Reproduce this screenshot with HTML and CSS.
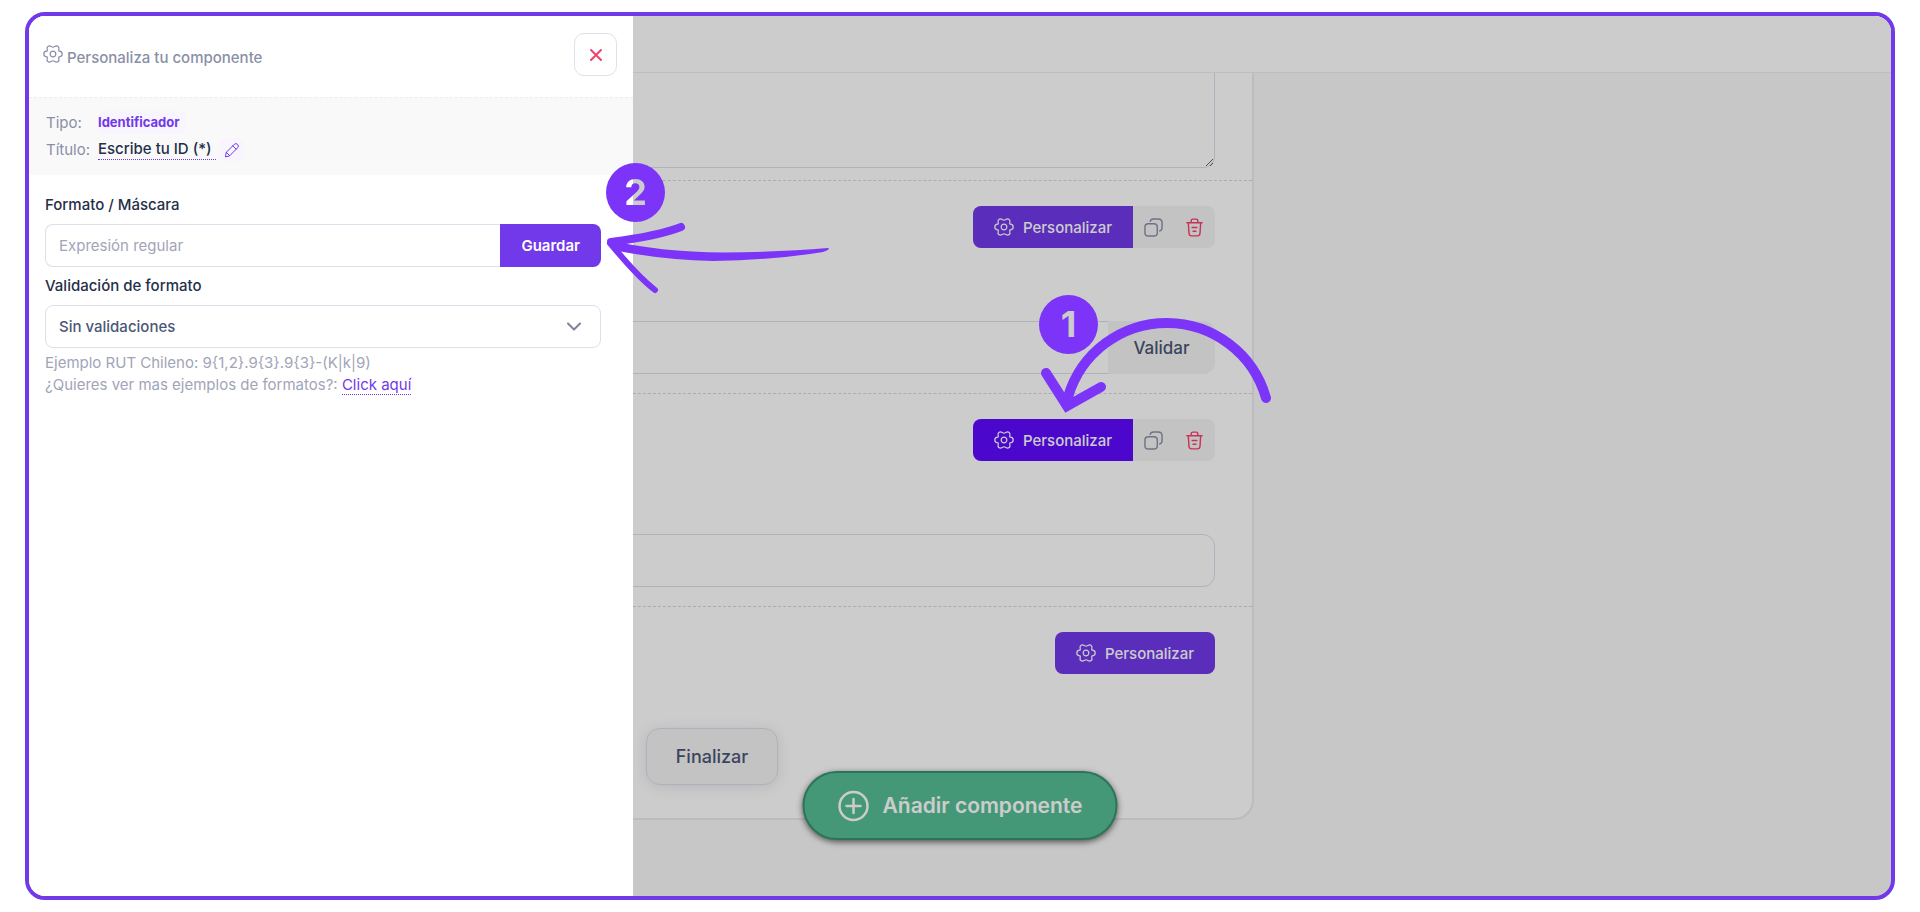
FILE: index.html
```
<!DOCTYPE html>
<html lang="es">
<head>
  <meta charset="UTF-8">
  <title>Personaliza tu componente</title>
  <link rel="stylesheet" href="styles.css">
</head>
<body>
  <svg class="sprite" aria-hidden="true">
    <symbol id="gear" viewBox="-12 -12 24 24">
      <path d="M11 0C11 3.800 8.200 3.200 7 3.500C5.900 4.200 8.700 7.200 6.200 9C3.500 11.200 2.300 8.300 0 8.100C-2.300 8.300 -3.500 11.200 -6.200 9C-8.700 7.200 -5.900 4.200 -7 3.500C-8.200 3.200 -11 3.800 -11 0C-11 -3.800 -8.200 -3.200 -7 -3.500C-5.900 -4.200 -8.700 -7.200 -6.200 -9C-3.500 -11.200 -2.300 -8.300 0 -8.100C2.300 -8.300 3.500 -11.200 6.200 -9C8.700 -7.200 5.900 -4.200 7 -3.500C8.200 -3.200 11 -3.800 11 0Z"/>
      <circle r="3.4"/>
    </symbol>
    <symbol id="copy" viewBox="0 0 20 20">
      <rect x="1" y="6" width="13" height="13" rx="3.5"/>
      <path d="M6.5 3.5Q7 1 10 1H15Q19 1 19 5V10Q19 13.2 16.5 13.6"/>
    </symbol>
    <symbol id="trash" viewBox="0 0 20 20">
      <path d="M2 5H18M6.5 5V3Q6.5 1.2 8.3 1.2H11.7Q13.5 1.2 13.5 3V5M3.500 5L4.200 16Q4.400 18.800 7 18.800H13Q15.600 18.800 15.800 16L16.500 5M7.5 10H12.5M8.5 14H11.5"/>
    </symbol>
  </svg>

  <div class="frame">
    <header class="navbar"></header>

    <main class="page">
      <div class="card">
        <div class="card-top">
          <textarea class="field area" aria-label="Texto"></textarea>
        </div>

        <section class="component">
          <div class="toolbar">
            <button class="btn-custom" type="button"><svg class="icon"><use href="#gear"/></svg>Personalizar</button>
            <button class="btn-tool" type="button" aria-label="Duplicar"><svg class="icon"><use href="#copy"/></svg></button>
            <button class="btn-tool danger" type="button" aria-label="Eliminar"><svg class="icon"><use href="#trash"/></svg></button>
          </div>
          <div class="group">
            <input class="field" type="text" aria-label="Valor">
            <button class="btn-check" type="button">Validar</button>
          </div>
        </section>

        <section class="component">
          <div class="toolbar">
            <button class="btn-custom active" type="button"><svg class="icon"><use href="#gear"/></svg>Personalizar</button>
            <button class="btn-tool" type="button" aria-label="Duplicar"><svg class="icon"><use href="#copy"/></svg></button>
            <button class="btn-tool danger" type="button" aria-label="Eliminar"><svg class="icon"><use href="#trash"/></svg></button>
          </div>
          <div class="group">
            <input class="field" type="text" aria-label="ID">
          </div>
        </section>

        <section class="component last">
          <div class="toolbar">
            <button class="btn-custom" type="button"><svg class="icon"><use href="#gear"/></svg>Personalizar</button>
          </div>
          <button class="btn-finish" type="button">Finalizar</button>
        </section>
      </div>
    </main>

    <button class="btn-add" type="button">
      <svg viewBox="0 0 32 32"><circle cx="16" cy="16" r="14"/><path d="M16 9V23M9 16H23"/></svg>
      Añadir componente
    </button>

    <div class="overlay"></div>

    <aside class="drawer">
      <div class="drawer-header">
        <h1><svg class="icon"><use href="#gear"/></svg>Personaliza tu componente</h1>
        <button class="btn-close" type="button" aria-label="Cerrar">
          <svg viewBox="0 0 14 14"><path d="M2 2L12 12M12 2L2 12"/></svg>
        </button>
      </div>

      <div class="info">
        <span>Tipo:</span>
        <span class="badge">Identificador</span>
        <span>Título:</span>
        <span class="title">
          <a href="#">Escribe tu ID (*)</a>
          <button class="btn-edit" type="button" aria-label="Editar título">
            <svg viewBox="0 0 16 16"><path d="M1.5 14.5L2.3 10.3L10.3 2.3Q12 .8 13.6 2.4Q15.200 4 13.700 5.700L5.700 13.700ZM8.800 3.800L12.200 7.200M2.300 10.300L5.700 13.700"/></svg>
          </button>
        </span>
      </div>

      <form class="form">
        <label for="mask">Formato / Máscara</label>
        <div class="mask">
          <input type="text" id="mask" placeholder="Expresión regular">
          <button type="button">Guardar</button>
        </div>

        <label for="validation">Validación de formato</label>
        <div class="select">
          <select id="validation">
            <option>Sin validaciones</option>
          </select>
          <svg viewBox="0 0 14 9"><path d="M1 1.500L7 7.500L13 1.500"/></svg>
        </div>

        <p class="help">Ejemplo RUT Chileno: 9{1,2}.9{3}.9{3}-(K|k|9)</p>
        <p class="help">¿Quieres ver mas ejemplos de formatos?: <a href="#">Click aquí</a></p>
      </form>
    </aside>

    <!-- Step callouts -->
    <span class="step step-1">1</span>
    <svg class="arrow arrow-1" viewBox="1035 312 240 106">
      <path d="M1266 398A103 103 0 0 0 1068 397"/>
      <path d="M1046 373L1067 406L1101 387"/>
    </svg>
    <span class="step step-2">2</span>
    <svg class="arrow arrow-2" viewBox="600 215 240 86">
      <path class="upper" d="M611 242Q658 236 681 227"/>
      <path class="lower" d="M610 243Q637 276 655 290"/>
      <path class="shaft" d="M608 240Q660 252 723 252.500Q780 252 828 248Q831 249 823 252Q775 260 713 261Q665 260 618 251Z"/>
    </svg>
  </div>
</body>
</html>
```

FILE: styles.css
```
* { box-sizing: border-box; }
body { margin: 0; background: #fff; font-family: Inter, "Liberation Sans", sans-serif; font-size: 15px; color: #252f4a; }
button, input, select, textarea { font: inherit; margin: 0; }
button { cursor: pointer; border: none; }
svg { fill: none; stroke: currentColor; stroke-linecap: round; stroke-linejoin: round; flex: none; }
.sprite { position: absolute; width: 0; height: 0; }
.icon { width: 20px; height: 20px; stroke-width: 1.5; }

.frame { position: relative; display: flex; flex-direction: column; height: calc(100vh - 24px); margin: 12px 25px; border: 4px solid #7239ea; border-radius: 20px; background: #f9f9f9; overflow: hidden; }
.navbar { height: 57px; flex: none; background: #fff; border-bottom: 1px solid #eee; }
.page { flex: 1; padding-left: 141px; }

/* Form preview */
.card { max-width: 1084px; background: #fff; border: 2px solid #ebebf0; border-top: none; border-radius: 0 0 20px 20px; }
.card-top { padding: 0 37px 12px; }
.field { display: block; width: 100%; height: 53px; padding: 0 16px; border: 1px solid #dbdfe9; border-radius: 12px; background: #fff; outline: none; }
.area { height: 95px; border-top: none; border-radius: 0 0 12px 12px; resize: vertical; }
.component { height: 213px; padding: 25px 37px 0; border-top: 1px dashed #d8d8dc; }
.component.last { height: 212px; }
.toolbar { display: flex; width: max-content; margin-left: auto; border-radius: 8px; background: #f4f4f4; overflow: hidden; }
.btn-custom { display: flex; align-items: center; gap: 9px; height: 42px; padding: 0 21px; background: #7239ea; color: #fff; font-weight: 500; }
.btn-custom.active { background: #5e0aff; }
.btn-tool { display: flex; align-items: center; justify-content: center; width: 41px; height: 42px; padding: 0; background: none; color: #8a8fa8; }
.btn-tool .icon { width: 19px; height: 19px; }
.danger { color: #f8406c; }
.group { display: flex; margin-top: 73px; }
.btn-check { flex: none; width: 107px; padding: 0; border-radius: 0 12px 12px 0; background: #f4f4f4; color: #4b5675; font-size: 17px; font-weight: 500; }
.group .field:not(:last-child) { border-right: none; border-radius: 12px 0 0 12px; }
.btn-finish { display: block; height: 57px; margin: 54px auto 0; padding: 0 29px; border: 1px solid #dbdfee; border-radius: 14px; background: #f4f4f4; box-shadow: 0 2px 14px rgba(0, 0, 0, .1); color: #4b5675; font-size: 18px; font-weight: 500; }

.btn-add { position: absolute; left: 50%; bottom: 56px; transform: translateX(-50%); display: flex; align-items: center; gap: 13px; height: 69px; padding: 0 33px; border: 2px solid #39936f; border-radius: 35px; background: #55bf96; box-shadow: 0 2px 6px rgba(0, 0, 0, .6); color: #fff; font-size: 21px; font-weight: 600; white-space: nowrap; }
.btn-add svg { width: 32px; height: 32px; stroke-width: 2.5; }
.overlay { position: absolute; inset: 0; background: rgba(0, 0, 0, .2); }

/* Settings drawer */
.drawer { position: absolute; top: 0; bottom: 0; left: 0; width: 604px; max-width: 100%; background: #fff; }
.drawer-header { display: flex; align-items: center; justify-content: space-between; height: 81px; padding: 0 16px 4px 14px; }
h1 { display: flex; align-items: flex-end; gap: 4px; margin: 0; padding-top: 3px; color: #8a8fa8; font-size: 15px; font-weight: 500; line-height: 20px; }
h1 .icon { margin-bottom: 4px; }
.btn-close { display: flex; align-items: center; justify-content: center; width: 43px; height: 43px; border: 1px solid #dfe1ec; border-radius: 10px; background: #fff; color: #f1416c; }
.btn-close svg { width: 14px; height: 14px; stroke-width: 2; }
.info { display: grid; grid-template-columns: 44px 1fr; align-items: center; gap: 4px 8px; padding: 13px 17px 14px; border-top: 1px dashed #eee; background: #f9f9f9; color: #8a8fa8; line-height: 23px; }
.badge { justify-self: start; padding: 0 6px 0 0; border-radius: 6px; background: #f8f5ff; color: #7239ea; font-size: 13px; font-weight: 700; }
.title { display: flex; align-items: center; gap: 4px; }
.title a { padding-right: 4px; border-bottom: 1px dotted #7239ea; color: #252f4a; font-weight: 500; line-height: 20px; text-decoration: none; }
.btn-edit { display: flex; align-items: center; justify-content: center; width: 24px; height: 23px; padding: 0; border-radius: 6px; background: #f8f5ff; color: #7239ea; }
.btn-edit svg { width: 16px; height: 16px; stroke-width: 1; }

.form { padding: 19px 32px 0 16px; }
.form label { display: block; margin-bottom: 8px; line-height: 22px; font-weight: 500; }
.mask { display: flex; height: 43px; margin-bottom: 8px; }
.mask input { flex: 1; min-width: 0; padding: 0 13px; border: 1px solid #dbdfe9; border-right: none; border-radius: 8px 0 0 8px; outline: none; }
.mask input::placeholder { color: #a1a5b7; }
.mask button { padding: 0 21px; border-radius: 0 8px 8px 0; background: #7239ea; color: #fff; font-weight: 600; }
.select { position: relative; margin-bottom: 4px; }
.select select { display: block; width: 100%; height: 43px; padding: 0 13px; border: 1px solid #dbdfe9; border-radius: 8px; background: #fff; color: #4b5675; font-weight: 500; appearance: none; }
.select svg { position: absolute; top: 17px; right: 20px; width: 14px; height: 9px; stroke-width: 2; color: #7e8299; pointer-events: none; }
.help { margin: 0; color: #a1a5b7; line-height: 22px; }
.help a { border-bottom: 1px dotted #7239ea; color: #7239ea; text-decoration: none; }

/* Step callouts */
.step { position: absolute; width: 59px; height: 59px; border-radius: 50%; background: #7c35f8; color: #ccc; font-size: 36px; font-weight: 700; line-height: 59px; text-align: center; }
.step-1 { left: 1010px; top: 279px; }
.step-2 { left: 577px; top: 147px; color: transparent; background: linear-gradient(90deg, #fff 27px, #ccc 27px) text, #7c35f8; }
.arrow { position: absolute; color: #7c35f8; }
.arrow-1 { left: 1006px; top: 296px; width: 240px; height: 106px; stroke-width: 10; stroke-linejoin: miter; }
.arrow-2 { left: 571px; top: 199px; width: 240px; height: 86px; }
.upper { stroke-width: 8; }
.lower { stroke-width: 6; }
.shaft { fill: currentColor; stroke: none; }
```
